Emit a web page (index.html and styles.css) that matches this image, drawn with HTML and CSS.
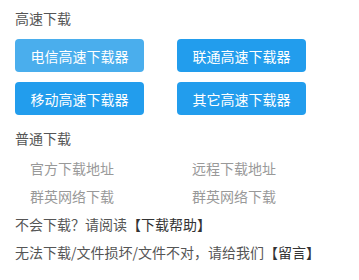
FILE: index.html
```html
<!DOCTYPE html>
<html lang="zh-CN">
<head>
<meta charset="utf-8">
<link rel="stylesheet" href="styles.css">
</head>
<body>
<div class="page">
  <div class="title title-top">高速下载</div>
  <div class="btns">
    <a class="btn btn-light">电信高速下载器</a>
    <a class="btn">联通高速下载器</a>
    <a class="btn">移动高速下载器</a>
    <a class="btn">其它高速下载器</a>
  </div>
  <div class="title title-mid">普通下载</div>
  <div class="links">
    <a class="link">官方下载地址</a>
    <a class="link">远程下载地址</a>
    <a class="link">群英网络下载</a>
    <a class="link">群英网络下载</a>
  </div>
  <p class="note">不会下载？请阅读<a class="strong">【下载帮助】</a></p>
  <p class="note">无法下载/文件损坏/文件不对，请给我们<a class="strong">【留言】</a></p>
</div>
</body>
</html>
```
FILE: styles.css
```css
html, body {
  margin: 0;
  padding: 0;
  background: #fff;
}
body {
  font-family: "Noto Sans CJK SC", "Liberation Sans", sans-serif;
  font-size: 14px;
  color: #555;
}
.page {
  padding: 8px 0 0 15px;
}
.title {
  line-height: 20px;
  color: #555;
}
.btns {
  display: grid;
  grid-template-columns: 129px 129px;
  column-gap: 33px;
  row-gap: 10px;
  margin-top: 11px;
}
.btn {
  display: flex;
  align-items: center;
  justify-content: center;
  height: 33px;
  border-radius: 4px;
  background: #229ded;
  color: #fff;
  font-size: 14px;
  text-decoration: none;
}
.btn-light {
  background: #4aaeed;
}
.title-mid {
  margin-top: 13px;
}
.links {
  display: grid;
  grid-template-columns: 162px 120px;
  margin-top: 6px;
  padding-left: 15px;
}
.link {
  line-height: 28px;
  color: #999;
  text-decoration: none;
}
.note {
  margin: 0;
  line-height: 28px;
  color: #555;
}
.strong {
  color: #333;
  text-decoration: none;
}
```
